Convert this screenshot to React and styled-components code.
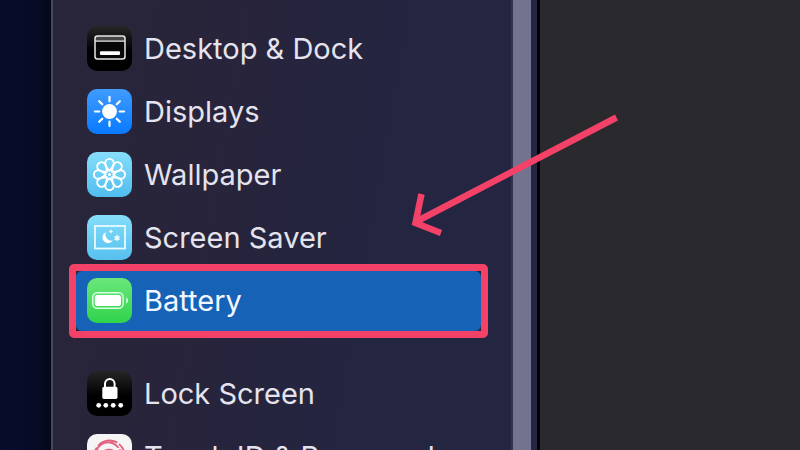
import React from 'react';
import styled, { createGlobalStyle } from 'styled-components';

const GlobalStyle = createGlobalStyle`
  * { box-sizing: border-box; }
  body { margin: 0; background: #070b25; }
`;

const Desktop = styled.div`
  position: relative;
  display: flex;
  height: 100vh;
  overflow: hidden;
  font-family: Inter, "Liberation Sans", sans-serif;
  background: linear-gradient(90deg, #070d2b 0, #070b25 36px, #050719 51px);
`;

const Window = styled.div`
  flex: 1;
  display: flex;
  margin-left: 51px;
  border-left: 2px solid #484956;
`;

const Sidebar = styled.nav`
  flex: none;
  display: flex;
  width: 487px;
  padding-right: 6px;
  border-right: 3px solid #020204;
  background: linear-gradient(100deg, #29253a 0%, #27243b 35%, #242541 65%, #242541 100%);
`;

const List = styled.ul`
  flex: 1;
  display: flex;
  flex-direction: column;
  gap: 3px;
  margin: 0;
  padding: 19px 32px 0 23px;
  list-style: none;
`;

const Item = styled.li`
  position: relative;
  margin-top: ${(p) => (p.$newGroup ? '30px' : '0')};
`;

const ItemLink = styled.a`
  display: flex;
  align-items: center;
  gap: 12px;
  height: 60px;
  padding: 7px 11px 8px;
  border-radius: 6px;
  color: ${(p) => (p.$selected ? '#f4f7ff' : '#e5e3ee')};
  background: ${(p) => (p.$selected ? '#1662b6' : 'transparent')};
  font-size: 29px;
  line-height: 44px;
  text-decoration: none;
  white-space: nowrap;
`;

const Tile = styled.svg`
  flex: none;
  width: 45px;
  height: 45px;
  border-radius: 10px;
  background: ${(p) => p.$fill};
`;

const HighlightFrame = styled.div`
  position: absolute;
  inset: -7px;
  border: 7px solid #f44168;
  border-radius: 5px;
  pointer-events: none;
`;

const ScrollThumb = styled.div`
  width: 18px;
  background: #74738f;
  box-shadow: -2px 0 0 #35344f;
`;

const Content = styled.main`
  flex: 1;
  background: #2a292e;
`;

const Arrow = styled.svg`
  position: absolute;
  left: 400px;
  top: 105px;
  width: 230px;
  height: 140px;
  pointer-events: none;
`;

const DockIcon = () => (
  <Tile viewBox="0 0 45 45" aria-hidden="true" $fill="linear-gradient(#262626, #000 55%)">
    <rect x="8" y="10" width="30" height="23" rx="2.5" fill="#080808" />
    <path d="M8 15V12a2 2 0 0 1 2-2h26a2 2 0 0 1 2 2v3z" fill="#454545" />
    <rect x="8" y="10" width="30" height="23" rx="2.5" fill="none" stroke="#e9e9e9" strokeWidth="1.5" />
    <path d="M8 15.2h30" stroke="#e9e9e9" strokeWidth="1.3" />
    <rect x="13" y="25.3" width="20" height="3.8" rx="1" fill="#fff" />
  </Tile>
);

const DisplayIcon = () => (
  <Tile viewBox="0 0 45 45" aria-hidden="true" $fill="linear-gradient(#409cff, #087aff)">
    <circle cx="22.5" cy="22.5" r="7.4" fill="#fff" />
    {[0, 45, 90, 135, 180, 225, 270, 315].map((a) => (
      <path key={a} d="M22.5 7.9v4.4" stroke="#fff" strokeWidth="2.2" strokeLinecap="round" transform={`rotate(${a} 22.5 22.5)`} />
    ))}
  </Tile>
);

const WallpaperIcon = () => (
  <Tile viewBox="0 0 45 45" aria-hidden="true" $fill="linear-gradient(#86defa, #50bdef)">
    <g fill="none" stroke="#fff" strokeWidth="1.9">
      {[0, 45, 90, 135, 180, 225, 270, 315].map((a) => (
        <path
          key={a}
          d="M22.5 18.6C20 16.2 18.2 13.8 18.2 11.2A4.3 4.3 0 0 1 26.8 11.2C26.8 13.8 25 16.2 22.5 18.6Z"
          transform={`rotate(${a} 22.5 22.5)`}
        />
      ))}
      <circle cx="22.5" cy="22.5" r="4.3" strokeWidth="1.5" />
    </g>
    <circle cx="22.5" cy="22.5" r="1.5" fill="#fff" />
  </Tile>
);

const ScreenSaverIcon = () => (
  <Tile viewBox="0 0 45 45" aria-hidden="true" $fill="linear-gradient(#85ddf9, #56c0ef)">
    <rect x="8" y="11" width="30" height="22.5" fill="none" stroke="#e8faff" strokeWidth="1.8" />
    <path d="M19 17.2a5.7 5.7 0 1 0 6.9 8.4A6.2 6.2 0 0 1 19 17.2z" fill="#fff" />
    <path d="M24 14.3l.7 1.5 1.5.7-1.5.7-.7 1.5-.7-1.5-1.5-.7 1.5-.7z" fill="#fff" />
    <path d="M30 19.2l1 2 2.1-.2-1.1 2 1.1 2-2.1-.2-1 2-1-2-2.1.2 1.1-2-1.1-2 2.1.2z" fill="#e5f9ff" />
  </Tile>
);

const BatteryIcon = () => (
  <Tile viewBox="0 0 45 45" aria-hidden="true" $fill="linear-gradient(#6be77b, #30d34c)">
    <rect x="5.7" y="14.7" width="30.5" height="15.5" rx="4.5" fill="none" stroke="#d9ffdf" strokeWidth="1.5" />
    <rect x="7.8" y="16.9" width="26.2" height="11.2" rx="2.4" fill="#fff" />
    <path d="M39.2 19.5c2.4 1.2 2.4 4.8 0 6z" fill="#d9ffdf" />
  </Tile>
);

const LockIcon = () => (
  <Tile viewBox="0 0 45 45" aria-hidden="true" $fill="linear-gradient(#262626, #000 55%)">
    <path d="M18 18v-5.2a4.8 4.8 0 0 1 9.6 0V18" fill="none" stroke="#fff" strokeWidth="2" />
    <rect x="15.3" y="15.8" width="15.2" height="12.2" rx="1.8" fill="#fff" />
    {[11.7, 18.8, 26.2, 33.7].map((x) => (
      <circle key={x} cx={x} cy="34.3" r="2.4" fill="#fff" />
    ))}
  </Tile>
);

const TouchIcon = () => (
  <Tile viewBox="0 0 45 45" aria-hidden="true" $fill="#f6f4f5">
    <g fill="none" stroke="#e3627f" strokeWidth="1.9" strokeLinecap="round">
      <path d="M11.5 11.4A15.2 15.2 0 0 1 29.5 8.2" />
      <path d="M32.6 10.6A15.2 15.2 0 0 1 36.5 28" />
      <path d="M8.5 28A15.2 15.2 0 0 1 9.4 14.2" />
      <path d="M11.5 28A12 12 0 0 1 31 13.2" />
      <path d="M33 16A12 12 0 0 1 33.5 27" />
      <path d="M14.5 29A8.8 8.8 0 1 1 30.8 25" />
      <path d="M17 31c2-3 0-5 0-8.5a5.6 5.6 0 0 1 11.2 0c0 3.500 0 5.500-1 8.500" />
      <path d="M20 33c2-4 2.500-6 2.500-10" />
    </g>
  </Tile>
);

const items = [
  { label: 'Desktop & Dock', Icon: DockIcon },
  { label: 'Displays', Icon: DisplayIcon },
  { label: 'Wallpaper', Icon: WallpaperIcon },
  { label: 'Screen Saver', Icon: ScreenSaverIcon },
  { label: 'Battery', Icon: BatteryIcon, selected: true },
  { label: 'Lock Screen', Icon: LockIcon, newGroup: true },
  { label: 'Touch ID & Password', Icon: TouchIcon },
];

export default function App() {
  return (
    <Desktop>
      <GlobalStyle />
      <Window>
        <Sidebar aria-label="Settings">
          <List>
            {items.map(({ label, Icon, selected, newGroup }) => (
              <Item key={label} $newGroup={newGroup}>
                <ItemLink href="#" $selected={selected} aria-current={selected ? 'page' : undefined}>
                  <Icon />
                  {label}
                </ItemLink>
                {selected && <HighlightFrame />}
              </Item>
            ))}
          </List>
          <ScrollThumb />
        </Sidebar>
        <Content />
      </Window>
      <Arrow viewBox="0 0 230 140" aria-hidden="true">
        <path d="M216.500 12.500L15.500 117M21.500 89L15.500 118L41 128" fill="none" stroke="#f44168" strokeWidth="6.500" />
      </Arrow>
    </Desktop>
  );
}
